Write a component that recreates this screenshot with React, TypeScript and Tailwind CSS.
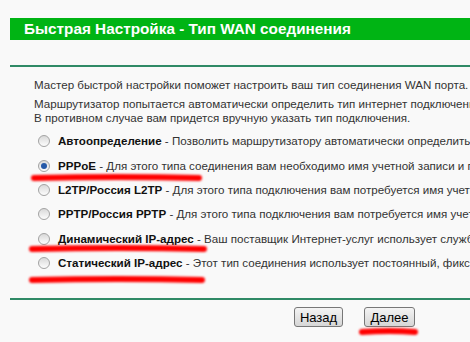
export default function App() {
  const options = [
    { label: "Автоопределение", text: "Позволить маршрутизатору автоматически определить тип подключения", checked: false },
    { label: "PPPoE", text: "Для этого типа соединения вам необходимо имя учетной записи и пароль", checked: true },
    { label: "L2TP/Россия L2TP", text: "Для этого типа подключения вам потребуется имя учетной записи", checked: false },
    { label: "PPTP/Россия PPTP", text: "Для этого типа подключения вам потребуется имя учетной записи", checked: false },
    { label: "Динамический IP-адрес", text: "Ваш поставщик Интернет-услуг использует службу DHCP", checked: false },
    { label: "Статический IP-адрес", text: "Этот тип соединения использует постоянный, фиксированный IP-адрес", checked: false },
  ];

  return (
    <div className="relative w-[470px] h-[342px] overflow-hidden bg-[#f9f9f9] font-['Liberation_Sans',Arial,sans-serif]">
      <div className="pt-[18px] pl-[10px]">
        {/* Header */}
        <div className="h-[22px] bg-[#00b414] pl-[14px] flex items-center">
          <span className="text-white font-bold text-[15.3px] whitespace-nowrap">Быстрая Настройка - Тип WAN соединения</span>
        </div>

        <div className="mt-[25px] h-[2px] bg-[#2f8a66]" />

        {/* Body */}
        <div className="pl-[24px] text-[11.6px] leading-[14px] text-[#333] whitespace-nowrap">
          <p className="mt-[11px]">Мастер быстрой настройки поможет настроить ваш тип соединения WAN порта.</p>
          <p className="mt-[5px]">Маршрутизатор попытается автоматически определить тип интернет подключения.</p>
          <p>В противном случае вам придется вручную указать тип подключения.</p>

          <div className="mt-[4px]">
            {options.map((o) => (
              <div key={o.label} className="h-[24.4px] flex items-center">
                <span className="ml-[4px] w-[12px] h-[12px] rounded-full border border-[#a3a3a3] bg-gradient-to-b from-[#d9d9d9] to-[#fdfdfd] flex items-center justify-center shrink-0">
                  {o.checked && <span className="w-[6px] h-[6px] rounded-full bg-[#2559a8]" />}
                </span>
                <span className="ml-[8px]">
                  <b className="text-[#111]">{o.label}</b> - {o.text}
                </span>
              </div>
            ))}
          </div>
        </div>

        <div className="mt-[23px] h-[2px] bg-[#2f8a66]" />

        {/* Buttons */}
        <div className="mt-[7px] ml-[284px] flex gap-[21px]">
          <button className="w-[49px] h-[20px] rounded-[3px] border border-[#777] bg-gradient-to-b from-[#f4f4f4] to-[#d6d6d6] text-[13px] leading-none text-black">Назад</button>
          <button className="w-[51px] h-[20px] rounded-[3px] border border-[#777] bg-gradient-to-b from-[#f4f4f4] to-[#d6d6d6] text-[13px] leading-none text-black">Далее</button>
        </div>
      </div>

      {/* Red marker annotations */}
      <svg className="absolute inset-0 pointer-events-none" width="470" height="342">
        <defs>
          <filter id="soft">
            <feGaussianBlur stdDeviation="0.8" />
          </filter>
        </defs>
        <g stroke="#f00" strokeWidth="6" strokeLinecap="round" fill="none" filter="url(#soft)">
          <path d="M34 178 Q120 176 199 178" />
          <path d="M32 249 Q120 247 204 249" />
          <path d="M32 280 Q120 278 202 280" />
          <path d="M362 332 Q390 330 415 332" />
        </g>
      </svg>
    </div>
  );
}
